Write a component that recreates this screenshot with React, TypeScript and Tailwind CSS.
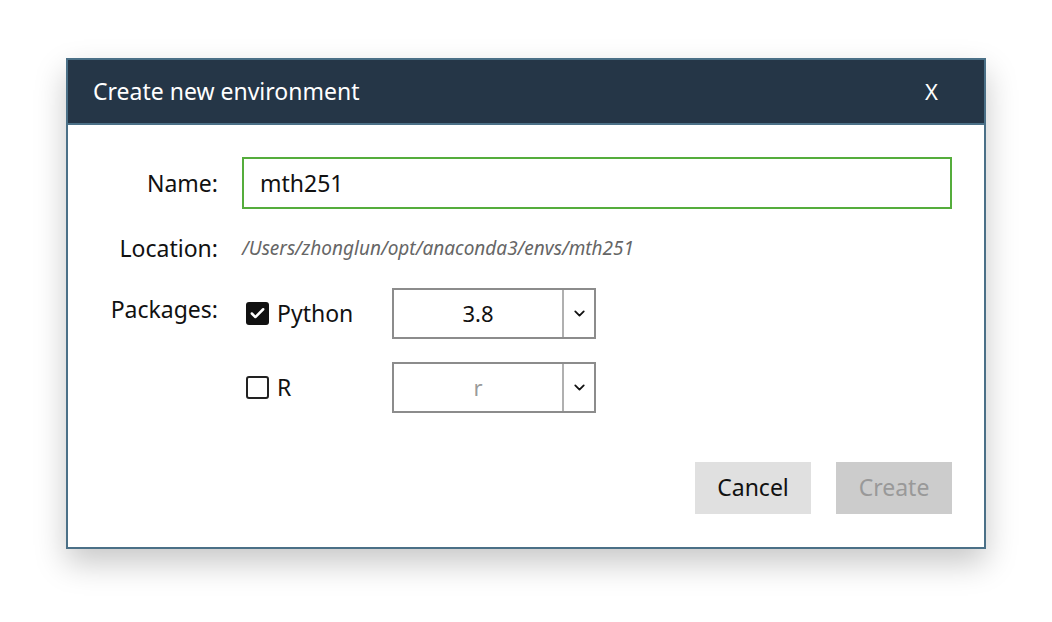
import { ChevronDown, Check } from 'lucide-react'

const font = { fontFamily: '"Noto Sans", "Open Sans", sans-serif' }

function Select({ value, muted }: { value: string; muted?: boolean }) {
  return (
    <div className="flex h-[51px] w-[204px] border-2 border-[#8c8c8c] bg-white">
      <div
        className={`flex flex-1 items-center justify-center text-[22px] ${
          muted ? 'text-[#9a9a9a]' : 'text-[#111]'
        }`}
      >
        {value}
      </div>
      <div className="flex w-[32px] items-center justify-center border-l-2 border-[#b0b0b0]">
        <ChevronDown className="h-[17px] w-[17px] text-[#111]" strokeWidth={2.5} />
      </div>
    </div>
  )
}

function Box({ checked }: { checked?: boolean }) {
  return checked ? (
    <span className="flex h-[23px] w-[23px] items-center justify-center rounded-[3px] bg-[#111]">
      <Check className="h-[17px] w-[17px] text-white" strokeWidth={3.5} />
    </span>
  ) : (
    <span className="h-[23px] w-[23px] rounded-[3px] border-2 border-[#222] bg-white" />
  )
}

export default function App() {
  return (
    <div className="min-h-[622px] w-full bg-white pt-[58px]" style={font}>
      <div className="ml-[66px] w-[920px] border-2 border-[#4b7087] bg-white shadow-[0_14px_30px_rgba(0,0,0,0.22)]">
        {/* Header */}
        <div className="flex h-[65px] items-center justify-between border-b-2 border-[#4b7087] bg-[#253647] pl-[25px] pr-[46px] text-white">
          <span className="text-[23px]">Create new environment</span>
          <span className="text-[22px]">X</span>
        </div>

        {/* Body */}
        <div className="pb-[33px] pr-[32px] pt-[32px]">
          <div className="flex items-center">
            <div className="w-[150px] text-right text-[23px] text-[#111]">Name:</div>
            <div className="ml-[24px] flex h-[52px] flex-1 items-center border-2 border-[#55ad3c] px-[16px] text-[23px] text-[#111]">
              mth251
            </div>
          </div>

          <div className="mt-[22px] flex items-center">
            <div className="w-[150px] text-right text-[23px] text-[#111]">Location:</div>
            <div className="ml-[24px] text-[19px] italic text-[#666]">
              /Users/zhonglun/opt/anaconda3/envs/mth251
            </div>
          </div>

          <div className="mt-[22px] flex items-start">
            <div className="w-[150px] pt-[4px] text-right text-[23px] text-[#111]">Packages:</div>
            <div className="ml-[28px] flex flex-col gap-[23px]">
              <div className="flex items-center">
                <div className="flex w-[146px] items-center gap-[8px] text-[23px] text-[#111]">
                  <Box checked />
                  Python
                </div>
                <Select value="3.8" />
              </div>
              <div className="flex items-center">
                <div className="flex w-[146px] items-center gap-[8px] text-[23px] text-[#111]">
                  <Box />
                  R
                </div>
                <Select value="r" muted />
              </div>
            </div>
          </div>

          <div className="mt-[49px] flex justify-end gap-[25px]">
            <button className="h-[52px] w-[116px] bg-[#e0e0e0] text-[23px] text-[#111]">Cancel</button>
            <button className="h-[52px] w-[116px] bg-[#cccccc] text-[23px] text-[#999]">Create</button>
          </div>
        </div>
      </div>
    </div>
  )
}
